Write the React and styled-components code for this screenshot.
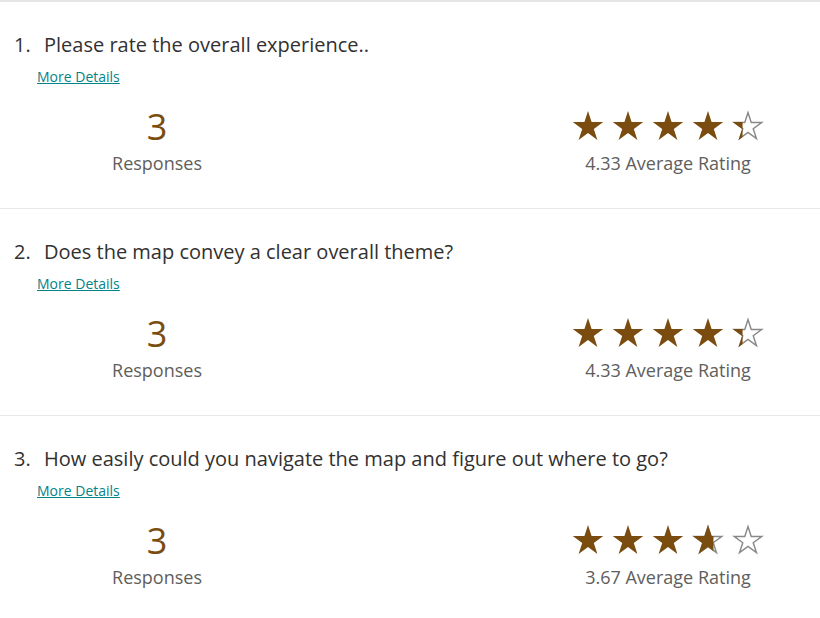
import styled, { createGlobalStyle } from 'styled-components';
import { useId } from 'react';

const GlobalStyle = createGlobalStyle`
	body {
		margin: 0;
		background: #ffffff;
		font-family: 'Segoe UI', 'Open Sans', sans-serif;
	}
`;

const Page = styled.div`
	border-top: 2px solid #e6e6e6;
	width: 820px;
`;

const Question = styled.section`
	box-sizing: border-box;
	height: ${(props) => (props.last ? '205px' : '207px')};
	padding-top: 29px;
	border-bottom: ${(props) => (props.last ? 'none' : '1px solid #e8e8e8')};
`;

const Title = styled.h2`
	display: flex;
	margin: 0;
	padding-left: 14px;
	color: #323130;
	font-size: 20px;
	font-weight: 400;
	line-height: 28px;
`;

const Number = styled.span`
	width: 30px;
`;

const MoreLink = styled.a`
	display: inline-block;
	margin: 8px 0 0 37px;
	color: #038387;
	font-size: 14px;
	line-height: 20px;
	text-decoration: underline;
	cursor: pointer;
`;

const Stats = styled.div`
	display: flex;
	justify-content: space-between;
	padding: 18px 32px 0 37px;
`;

const Stat = styled.div`
	display: flex;
	flex-direction: column;
	align-items: center;
	width: 240px;
`;

const Count = styled.div`
	color: #7a4c10;
	font-size: 36px;
	line-height: 44px;
`;

const Label = styled.div`
	color: #605e5c;
	font-size: 18px;
	line-height: 24px;
	margin-top: ${(props) => props.gap || '2px'};
`;

const Stars = styled.div`
	display: flex;
	gap: 8px;
	margin-top: 5px;
`;

const STAR = 'M16 1 L19.59 12.06 L31.22 12.06 L21.81 18.89 L25.4 29.94 L16 23.11 L6.6 29.94 L10.19 18.89 L0.78 12.06 L12.41 12.06 Z';

function Star({ fill }) {
	const id = useId();
	return (
		<svg width='32' height='32' viewBox='0 0 32 32'>
			<defs>
				<clipPath id={id}>
					<rect x='0' y='0' width={32 * fill} height='32' />
				</clipPath>
			</defs>
			{fill < 1 && <path d={STAR} fill='#ffffff' stroke='#8a8886' strokeWidth='1.6' transform='translate(16 16.5) scale(0.9) translate(-16 -16.5)' />}
			<path d={STAR} fill='#7a4c10' clipPath={`url(#${id})`} />
		</svg>
	);
}

function Rating({ value }) {
	return (
		<Stars>
			{[0, 1, 2, 3, 4].map((i) => (
				<Star key={i} fill={Math.max(0, Math.min(1, value - i))} />
			))}
		</Stars>
	);
}

const questions = [
	{ title: 'Please rate the overall experience..', responses: 3, rating: 4.33 },
	{ title: 'Does the map convey a clear overall theme?', responses: 3, rating: 4.33 },
	{ title: 'How easily could you navigate the map and figure out where to go?', responses: 3, rating: 3.67 },
];

export default function App() {
	return (
		<Page>
			<GlobalStyle />
			{questions.map((q, i) => (
				<Question key={i} last={i === questions.length - 1}>
					<Title>
						<Number>{i + 1}.</Number>
						{q.title}
					</Title>
					<MoreLink>More Details</MoreLink>
					<Stats>
						<Stat>
							<Count>{q.responses}</Count>
							<Label>Responses</Label>
						</Stat>
						<Stat>
							<Rating value={q.rating} />
							<Label gap='9px'>{q.rating.toFixed(2)} Average Rating</Label>
						</Stat>
					</Stats>
				</Question>
			))}
		</Page>
	);
}
